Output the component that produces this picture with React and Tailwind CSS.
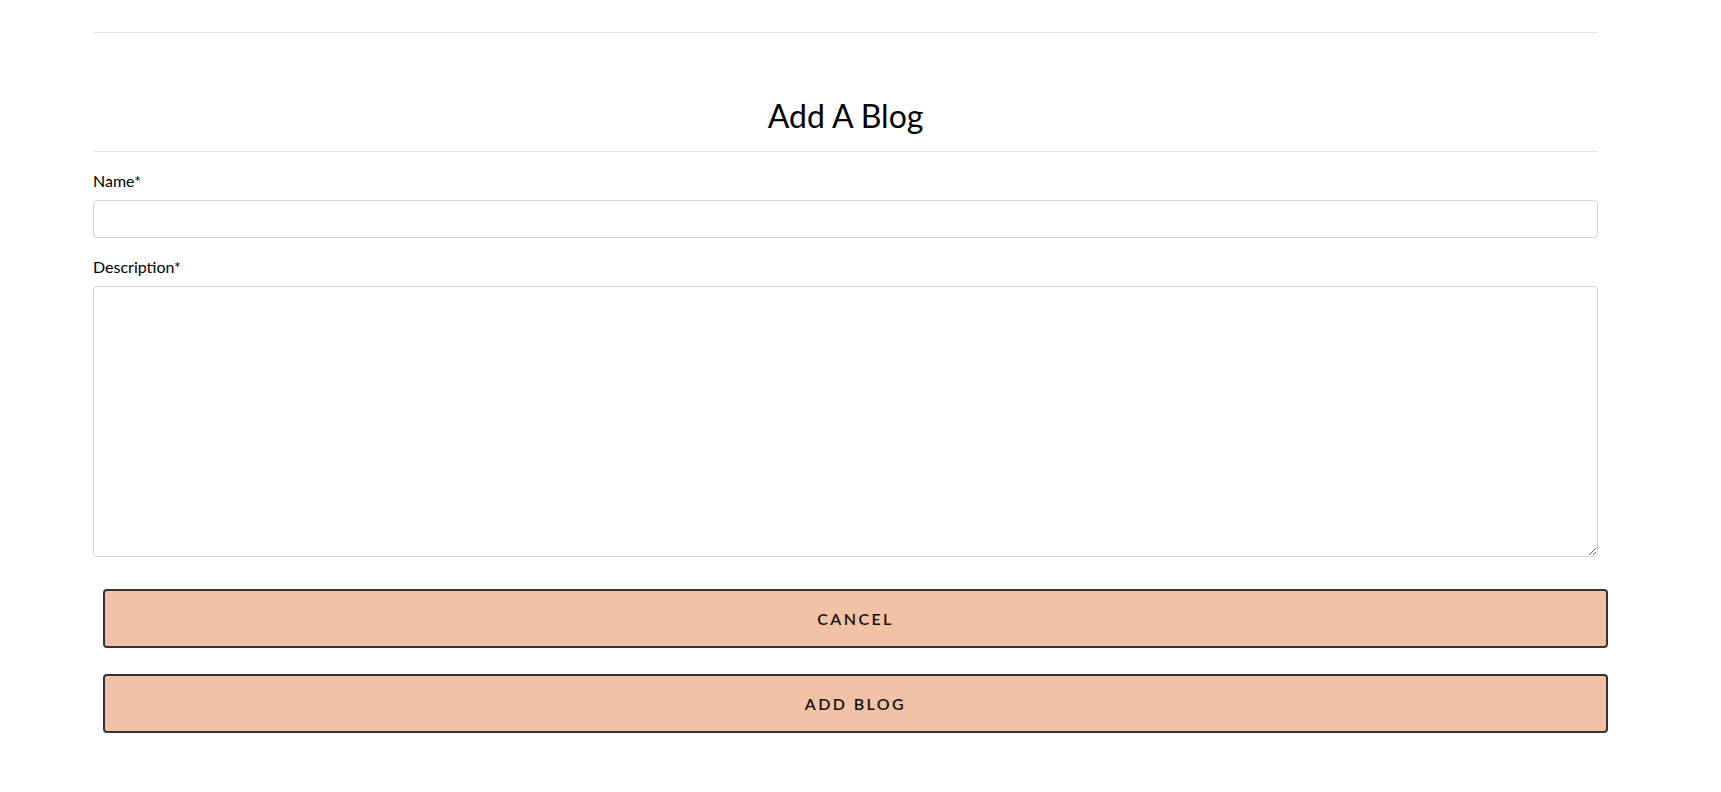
import React, { useState } from 'react';

function AddBlog() {
    const [name, setName] = useState('');
    const [description, setDescription] = useState('');

    return (
        <div className="min-h-screen bg-white font-['Lato','Liberation_Sans',sans-serif] text-black">
            <div className="mx-[93px] w-[1505px]">
                <div className="pt-[32px] border-b border-[#e5e5e5]" />

                <h1 className="mt-[64px] pb-[16px] text-center text-[32px] leading-[1.2] font-normal border-b border-[#e5e5e5]">
                    Add A Blog
                </h1>

                <form className="flex flex-col" onSubmit={(e) => e.preventDefault()}>
                    <label className="mt-[17px] text-[16px] leading-[24px]">Name*</label>
                    <input
                        type="text"
                        value={name}
                        onChange={(e) => setName(e.target.value)}
                        className="mt-[7px] h-[38px] w-full rounded-[4px] border border-[#ced4da] px-3 text-[16px] outline-none"
                    />

                    <label className="mt-[17px] text-[16px] leading-[24px]">Description*</label>
                    <textarea
                        value={description}
                        onChange={(e) => setDescription(e.target.value)}
                        className="mt-[7px] h-[271px] w-full rounded-[4px] border border-[#ced4da] px-3 py-2 text-[16px] outline-none"
                    />

                    <div className="ml-[10px] -mr-[10px] mt-[32px] flex flex-col gap-[26px]">
                        <button
                            type="button"
                            className="h-[59px] w-full rounded-[4px] border-2 border-[#333333] bg-[#f2c2a6] text-[16px] font-semibold tracking-[0.15em] text-[#111]"
                        >
                            CANCEL
                        </button>
                        <button
                            type="submit"
                            className="h-[59px] w-full rounded-[4px] border-2 border-[#333333] bg-[#f2c2a6] text-[16px] font-semibold tracking-[0.15em] text-[#111]"
                        >
                            ADD BLOG
                        </button>
                    </div>
                </form>
            </div>
        </div>
    );
}

export default function App() {
    return <AddBlog />;
}
